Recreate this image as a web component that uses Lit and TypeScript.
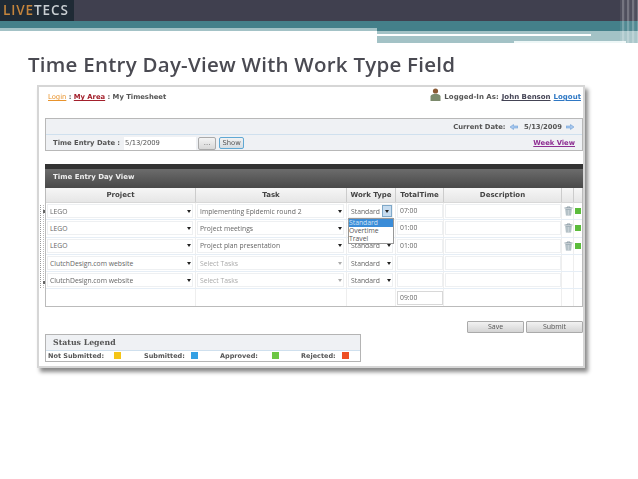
import { LitElement, html, css } from "lit";
import { customElement } from "lit/decorators.js";

const rows = [
  { p: "LEGO", t: "Implementing Epidemic round 2", time: "07:00", done: true, open: true },
  { p: "LEGO", t: "Project meetings", time: "01:00", done: true },
  { p: "LEGO", t: "Project plan presentation", time: "01:00", done: true },
  { p: "ClutchDesign.com website", t: "Select Tasks", time: "", ph: true },
  { p: "ClutchDesign.com website", t: "Select Tasks", time: "", ph: true },
] as any[];

const trash = html`<svg class="trash" viewBox="0 0 9 10" width="9" height="10"><path d="M0.5 2H8.5M3 2V1H6V2" fill="none" stroke="#8a9aa4" stroke-width="1"/><path d="M1.3 3H7.7L7.1 9.6H1.9Z" fill="#a3b2ba"/><path d="M3 4V9M4.5 4V9M6 4V9" stroke="#dfe6ea" stroke-width=".6"/></svg>`;

@customElement("app-root")
export class AppRoot extends LitElement {
  static styles = css`
    :host { display: block; width: 638px; height: 479px; background: #fff; overflow: hidden; position: relative; font-family: "DejaVu Sans", sans-serif; color: #555; }
    .top { position: relative; height: 43px; }
    .bar { height: 21px; background: #40404f; }
    .logo { width: 74px; height: 21px; background: #1f2a35; font: 600 13.5px/21px "Open Sans", sans-serif; color: #c8ced2; padding-left: 3px; box-sizing: border-box; letter-spacing: .9px; filter: blur(.3px); }
    .logo b { color: #c4843c; font-weight: 600; }
    .bands { display: flex; }
    .bl { width: 377px; }
    .bl .a { height: 7px; background: #44808a; }
    .bl .b { height: 3px; background: #a3c2c6; }
    .br { flex: 1; }
    .br .a { height: 10px; background: #44808a; }
    .br .b { height: 3px; background: #a3c2c6; }
    .br .c { height: 2px; background: #a3c2c6; }
    .br .c i { display: block; width: 214px; height: 2px; background: #fff; }
    .br .d { height: 5px; background: #a3c2c6; }
    .br .e { height: 2px; background: #a3c2c6; display: flex; }
    .br .e i { display: block; width: 137px; }
    .br .e u { display: block; width: 112px; background: #eef7f7; }
    .stripes { position: absolute; right: 0; top: 0; bottom: 0; width: 18px; background: repeating-linear-gradient(90deg, rgba(255,255,255,.08) 0 2px, rgba(255,255,255,.28) 2px 4px, rgba(255,255,255,.12) 4px 5px); }
    h1 { margin: 10px 0 0 28px; font: 600 20.5px/22px "Open Sans", sans-serif; letter-spacing: .25px; color: #4a4a52; white-space: nowrap; filter: blur(.3px); }
    .shot { margin: 10px 0 0 37px; width: 548px; height: 283px; box-sizing: border-box; border: 2px solid #d6d6d6; background: #fff; box-shadow: 3px 4px 4px #8a8a8a; position: relative; padding: 0 0 0 6px; filter: blur(.4px); font-size: 6.8px; }
    .hdr { display: flex; align-items: center; justify-content: space-between; height: 20px; padding: 0 2px 0 3px; font-weight: 700; color: #555; }
    .hdr .o { color: #e8932c; text-decoration: underline; font-weight: 400; }
    .hdr .r { color: #a3202c; text-decoration: underline; }
    .user { display: flex; align-items: center; gap: 3px; font-size: 7px; }
    .user .n { text-decoration: underline; color: #445; margin: 0; }
    .user .l { color: #2f78c4; text-decoration: underline; }
    .tool { margin-top: 11px; height: 33px; border: 1px solid #b8b8b8; box-sizing: border-box; background: #eff1f4; width: 538px; }
    .t1 { height: 15px; display: flex; align-items: center; justify-content: flex-end; gap: 4px; padding-right: 8px; border-bottom: 1px solid #cfe0ee; font-weight: 700; }
    .t2 { height: 16px; display: flex; align-items: center; padding: 0 7px; gap: 3px; font-weight: 700; }
    .dateinp { width: 71px; height: 13px; background: #fff; font-weight: 400; line-height: 13px; padding-left: 1px; margin-left: 1px; }
    .dots { width: 16px; height: 11px; border: 1px solid #aaa; border-radius: 2px; background: linear-gradient(#f4f4f4, #d8d8d8); text-align: center; line-height: 10px; font-weight: 400; margin-left: -1px; }
    .show { width: 23px; height: 10px; border: 1px solid #5fa8d4; border-radius: 2px; background: linear-gradient(#f2f2f2, #d6dde2); text-align: center; line-height: 10px; font-weight: 400; }
    .wk { margin-left: auto; color: #8e2e92; text-decoration: underline; }
    .grid { margin-top: 13px; width: 538px; border: 1px solid #bbb; border-top: 0; box-sizing: border-box; }
    .g1 { height: 5px; background: #333; margin: 0 -1px; }
    .g2 { height: 19px; margin: 0 -1px; background: linear-gradient(#6c6c6c, #484848); color: #eee; font-weight: 700; line-height: 16px; padding-left: 8px; font-size: 7px; }
    .row { display: grid; grid-template-columns: 150px 151px 49px 48px 118px 12px 1fr; box-sizing: border-box; }
    .row > div { border-right: 1px solid #eeeeee; box-sizing: border-box; display: flex; align-items: center; min-width: 0; position: relative; }
    .row > div:last-child { border-right: 0; }
    .head { height: 15px; background: linear-gradient(#f6f6f6, #e6e6e6); border-bottom: 1px solid #d8d8d8; font-weight: 700; font-size: 7px; color: #444; }
    .head > div { justify-content: center; border-right-color: #ccc; }
    .body { height: 17.3px; border-bottom: 1px solid #e6eef6; font-family: "Open Sans", sans-serif; font-size: 6.8px; color: #666; }
    .sel { flex: 1; margin: 0 2px 0 1px; height: 14px; background: #fff; border: 1px solid #eef0f2; display: flex; align-items: center; justify-content: space-between; padding: 0 1px 0 2px; box-sizing: border-box; min-width: 0; white-space: nowrap; }
    .sel i { width: 0; height: 0; border: 2.5px solid transparent; border-top: 3px solid #222; border-bottom: 0; }
    .ph { color: #aaa; }
    .ph i { border-top-color: #aaa; }
    .inp { flex: 1; margin: 0 0 0 1px; height: 14px; background: #fff; border: 1px solid #eef0f2; box-sizing: border-box; padding-left: 2px; line-height: 12px; }
    .drop { width: 10px; height: 12px; margin-right: -1px; background: #c6dcf0; border: 1px solid #7fa8c8; box-sizing: border-box; display: flex; align-items: center; justify-content: center; }
    .drop i { display: block; }
    .list { position: absolute; left: 1px; top: 15px; width: 46px; height: 26px; background: #fff; border: 1px solid #999; box-sizing: border-box; z-index: 3; line-height: 8.2px; color: #555; padding-left: 0; }
    .list div:first-child { background: #3a8cd8; color: #cfe3f6; }
    .ic { gap: 2px; }
    .trash { margin-left: 2px; flex: none; }
    .green { width: 6px; height: 6px; background: #5cbc3c; flex: none; margin-left: 1px; }
    .tot { height: 16.5px; border-bottom: 0; }
    .foot { display: flex; justify-content: flex-end; gap: 2px; margin: 14px 0 0; height: 12px; width: 538px; }
    .btn { width: 57px; height: 12px; border: 1px solid #aaa; box-sizing: border-box; border-radius: 1px; background: linear-gradient(#f2f2f2, #d4d4d4); text-align: center; line-height: 10px; font-family: "Open Sans", sans-serif; font-size: 7px; color: #555; }
    .legend { width: 316px; height: 28px; border: 1px solid #b4b4b4; box-sizing: border-box; margin-top: 1px; }
    .lt { height: 16px; background: #eff1f4; border-bottom: 1px solid #cfe0ee; box-sizing: border-box; font: 700 7.8px/15px "DejaVu Serif", serif; padding-left: 7px; color: #555; }
    .lr { height: 10px; display: grid; grid-template-columns: 96px 76px 81px 1fr; align-items: center; font-weight: 700; padding-left: 2px; font-size: 6.5px; white-space: nowrap; }
    .lr div { display: flex; align-items: center; justify-content: space-between; }
    .lr div:nth-child(1) { width: 73px; }
    .lr div:nth-child(2) { width: 54px; }
    .lr div:nth-child(3) { width: 59px; }
    .lr div:nth-child(4) { width: 48px; }
    .lr s { display: block; width: 7px; height: 7px; flex: none; }
    .handle { position: absolute; left: 1px; top: 118px; width: 2px; height: 83px; border-left: 1px dotted #999; border-right: 1px dotted #bbb; }
    .handle::before, .handle::after { content: ""; position: absolute; left: 2px; width: 2px; height: 3px; background: #666; }
    .handle::before { top: 5px; }
    .handle::after { top: 76px; }
    .usr { flex: none; margin-top: -6px; }
    .arr { flex: none; }
  `;

  render() {
    const arrow = (flip: boolean) => html`<svg class="arr" width="8" height="6" viewBox="0 0 8 6" style=${flip ? "transform:scaleX(-1)" : ""}><path d="M0 3L3.5 .5V2H8V4H3.5V5.5Z" fill="#a8c8ee" stroke="#5f94d0" stroke-width=".5"/></svg>`;
    return html`
      <div class="top">
        <div class="bar"><div class="logo"><b>LIVE</b>TECS</div></div>
        <div class="bands">
          <div class="bl"><div class="a"></div><div class="b"></div></div>
          <div class="br">
            <div class="a"></div><div class="b"></div>
            <div class="c"><i></i></div><div class="d"></div>
            <div class="e"><i></i><u></u></div>
          </div>
        </div>
        <div class="stripes"></div>
      </div>
      <h1>Time Entry Day-View With Work Type Field</h1>
      <div class="shot">
        <div class="handle"></div>
        <div class="hdr">
          <span><span class="o">Login</span> : <span class="r">My Area</span> : My Timesheet</span>
          <span class="user">
            <svg class="usr" width="11" height="13" viewBox="0 0 11 13"><circle cx="5.5" cy="3" r="2.6" fill="#8a5a34"/><path d="M0.5 13V8.5C0.5 7 2.5 6 4 6H7C8.5 6 10.5 7 10.5 8.5V13Z" fill="#7c8a6c"/></svg>
            Logged-In As: <span class="n">John Benson</span> <span class="l">Logout</span>
          </span>
        </div>
        <div class="tool">
          <div class="t1">Current Date: ${arrow(false)} <span>&nbsp;5/13/2009</span> ${arrow(true)}</div>
          <div class="t2">Time Entry Date : <span class="dateinp">5/13/2009</span><span class="dots">...</span><span class="show">Show</span><span class="wk">Week View</span></div>
        </div>
        <div class="grid">
          <div class="g1"></div>
          <div class="g2">Time Entry Day View</div>
          <div class="row head"><div>Project</div><div>Task</div><div>Work Type</div><div>TotalTime</div><div>Description</div><div></div><div></div></div>
          ${rows.map((r) => html`
            <div class="row body">
              <div><span class="sel"><span>${r.p}</span><i></i></span></div>
              <div><span class="sel ${r.ph ? "ph" : ""}"><span>${r.t}</span><i></i></span></div>
              <div>
                <span class="sel"><span>Standard</span>${r.open ? html`<span class="drop"><i></i></span>` : html`<i></i>`}</span>
                ${r.open ? html`<div class="list"><div>Standard</div><div>Overtime</div><div>Travel</div></div>` : ""}
              </div>
              <div><span class="inp">${r.time}</span></div>
              <div><span class="inp"></span></div>
              <div class="ic">${r.done ? trash : ""}</div>
              <div>${r.done ? html`<span class="green"></span>` : ""}</div>
            </div>`)}
          <div class="row body tot"><div></div><div></div><div></div><div><span class="inp" style="border-color:#d8d8d8">09:00</span></div><div></div><div></div><div></div></div>
        </div>
        <div class="foot"><span class="btn">Save</span><span class="btn">Submit</span></div>
        <div class="legend">
          <div class="lt">Status Legend</div>
          <div class="lr">
            <div>Not Submitted: <s style="background:#f5c518"></s></div>
            <div>Submitted: <s style="background:#33a0e4"></s></div>
            <div>Approved: <s style="background:#6cc644"></s></div>
            <div>Rejected: <s style="background:#ee4f24"></s></div>
          </div>
        </div>
      </div>
    `;
  }
}
